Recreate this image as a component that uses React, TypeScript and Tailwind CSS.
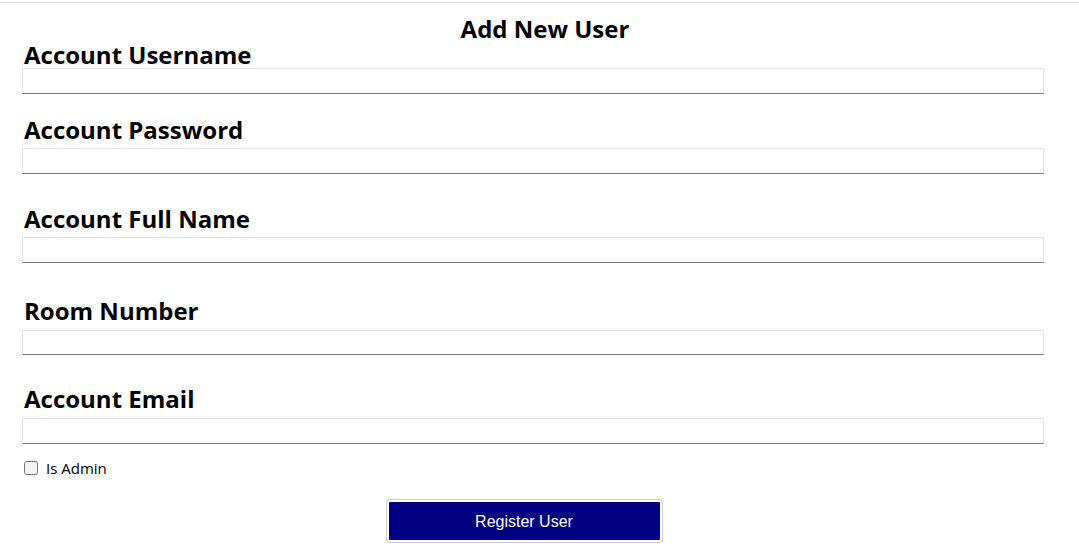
import React from 'react';

const fields = [
  { label: 'Account Username', labelTop: 'mt-[-3px]', inputTop: 'mt-[-1px]', h: 'h-[26px]', type: 'text' },
  { label: 'Account Password', labelTop: 'mt-[21px]', inputTop: 'mt-[4px]', h: 'h-[26px]', type: 'password' },
  { label: 'Account Full Name', labelTop: 'mt-[30px]', inputTop: 'mt-[4px]', h: 'h-[26px]', type: 'text' },
  { label: 'Room Number', labelTop: 'mt-[33px]', inputTop: 'mt-[5px]', h: 'h-[25px]', type: 'text' },
  { label: 'Account Email', labelTop: 'mt-[29px]', inputTop: 'mt-[5px]', h: 'h-[26px]', type: 'email' },
];

const App: React.FC = () => {
  return (
    <div className="min-h-screen bg-white pt-[2px] font-['Open_Sans',sans-serif] text-black">
      <div className="border-t border-[#dddddd]">
        <h1 className="mt-[12px] pl-[11px] text-center text-[24px] font-bold leading-[28px]">Add New User</h1>
        <form className="w-[1044px] pl-[22px]" onSubmit={(e) => e.preventDefault()}>
          {fields.map((f) => (
            <div key={f.label} className="flex flex-col">
              <label className={`${f.labelTop} relative pl-[2px] pt-[1px] text-[24px] font-bold leading-[28px]`}>
                {f.label}
              </label>
              <input
                type={f.type}
                className={`${f.inputTop} ${f.h} w-full border border-[#e5e5e5] border-b-[#7a7a7a] bg-white px-1 outline-none`}
              />
            </div>
          ))}
          <label className="mt-[14px] flex h-[20px] items-center gap-[8px] pl-[2px] text-[15px]">
            <input
              type="checkbox"
              className="h-[14px] w-[14px] appearance-none rounded-[3px] border border-[#777777] bg-[#f3f3f3]"
            />
            <span>Is Admin</span>
          </label>
          <div className="mt-[22px] flex justify-center pr-[18px]">
            <button
              type="submit"
              className="h-[42px] w-[275px] rounded-[3px] border-2 border-white bg-[#000080] pt-[1px] font-['Liberation_Sans',Arial,sans-serif] text-[16px] text-white ring-1 ring-[#cccccc]"
            >
              Register User
            </button>
          </div>
        </form>
      </div>
    </div>
  );
};

export default App;
